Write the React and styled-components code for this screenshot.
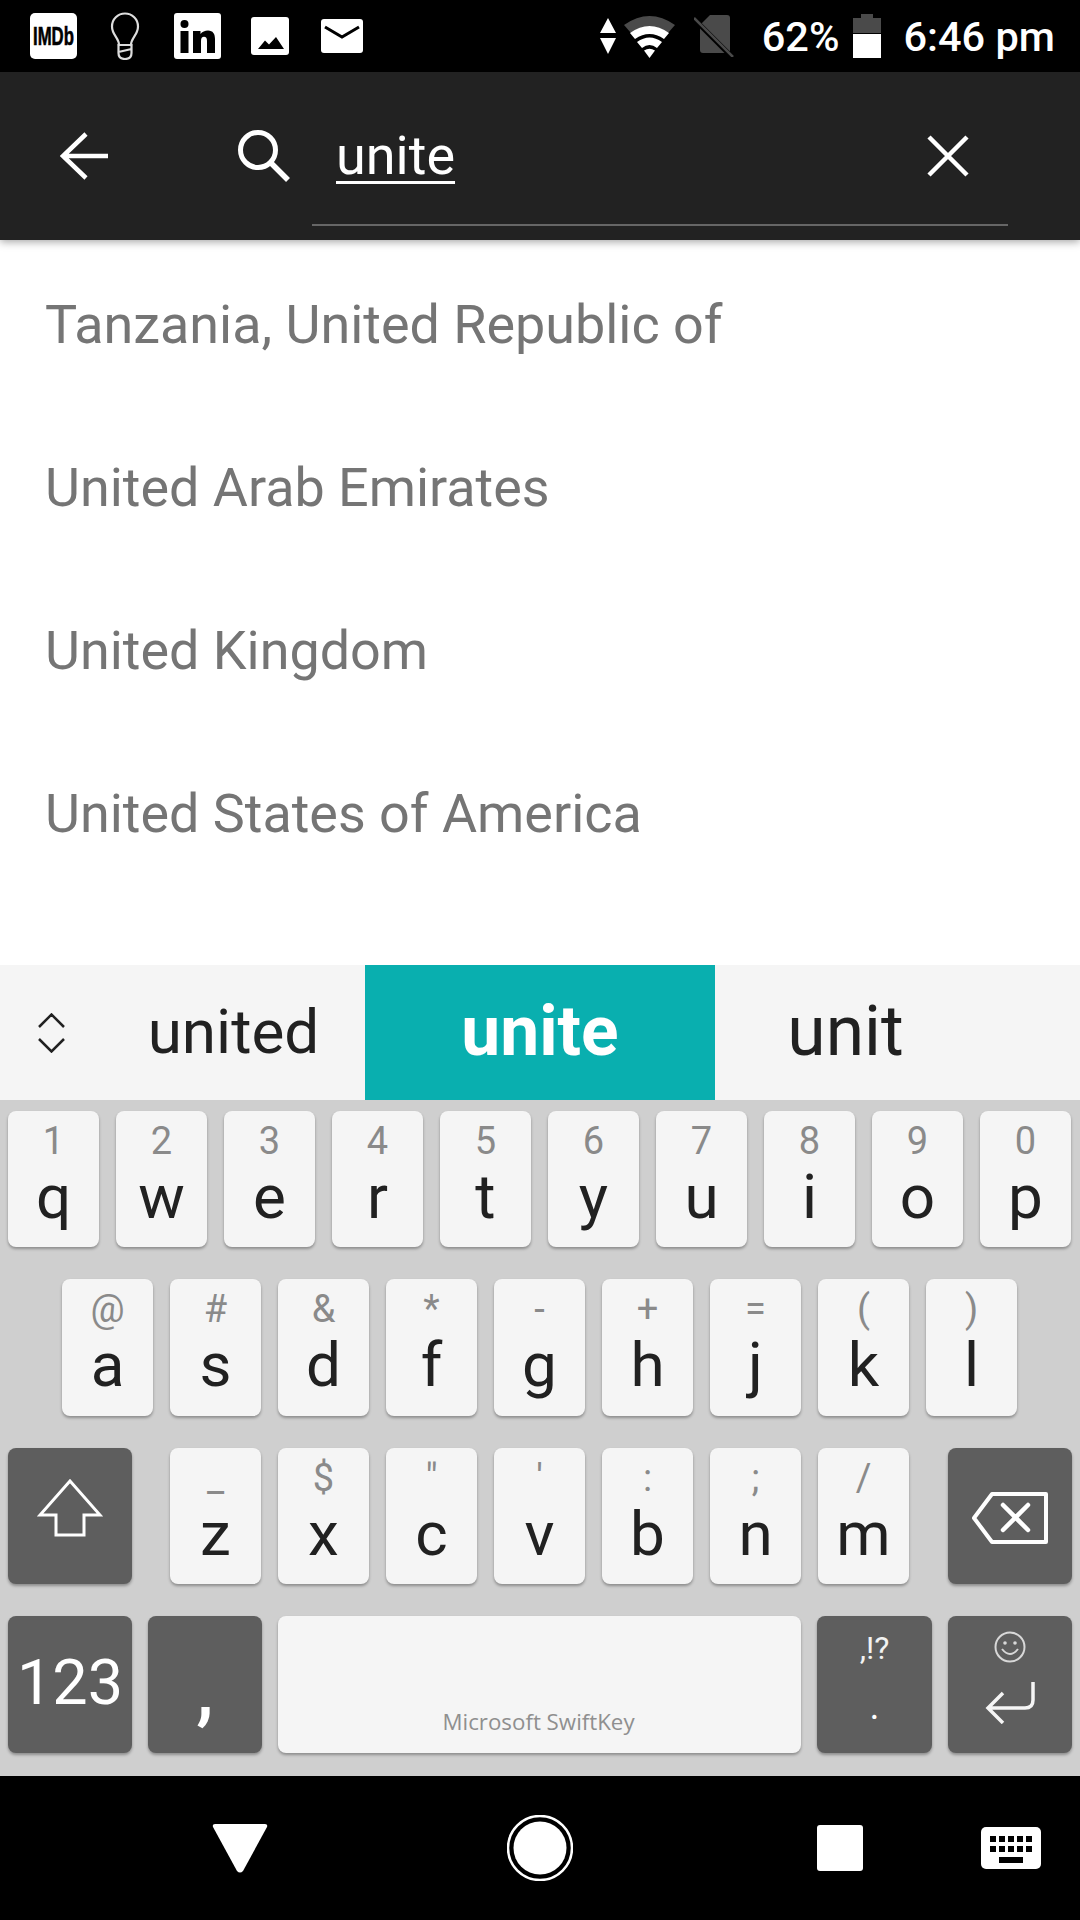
import React from "react";
import styled, { createGlobalStyle } from "styled-components";

const Global = createGlobalStyle`
  html, body { margin: 0; padding: 0; background: #000; }
  * { box-sizing: border-box; }
`;

const Page = styled.div`
  width: 1080px; height: 1920px; display: flex; flex-direction: column; overflow: hidden;
  font-family: Roboto, "Liberation Sans", sans-serif; background: #fff;
`;
const StatusBar = styled.div`
  height: 72px; flex: none; background: #000; display: flex; align-items: center; justify-content: space-between;
  padding: 0 25px 0 30px; color: #fff;
`;
const StatusGroup = styled.div`display: flex; align-items: center;`;
const Glyph = styled.svg`display: block; flex: none; margin-left: ${p => p.$ml || 0}px; margin-top: ${p => p.$mt || 0}px;`;
const StatusText = styled.span`
  font-size: ${p => p.$size}px; font-weight: 500; line-height: 72px; padding-top: 2px; margin-left: ${p => p.$ml}px; white-space: nowrap;
`;
const Toolbar = styled.div`
  height: 168px; flex: none; background: #222; display: flex; align-items: center; padding: 0 0 0 60px;
  position: relative; z-index: 2; box-shadow: 0 2px 8px rgba(0,0,0,.35);
`;
const Field = styled.div`
  margin-left: 21px; width: 696px; align-self: stretch; margin-bottom: 14px; padding: 16px 39px 0 24px;
  border-bottom: 2px solid #666; display: flex; align-items: center; justify-content: space-between;
`;
const Query = styled.span`
  color: #fff; font-size: 54px; line-height: 64px; text-decoration: underline; text-decoration-thickness: 3px; text-underline-offset: 7px;
`;
const List = styled.div`height: 725px; flex: none; padding: 3px 0 0 45px; background: #fff;`;
const Row = styled.div`
  height: 163px; display: flex; align-items: center; color: #757575; font-size: 53.9px; white-space: nowrap;
`;
const Suggestions = styled.div`
  height: 135px; flex: none; background: #f5f5f5; display: flex; align-items: stretch; color: #212121;
`;
const Toggle = styled.div`width: 100px; padding-left: 38px; display: flex; align-items: center;`;
const Cell = styled.div`
  width: ${p => p.$w}px; padding: 0 ${p => p.$pr || 0}px 2px ${p => p.$pl || 0}px; display: flex; align-items: center; justify-content: center;
  font-size: ${p => p.$size}px; font-weight: ${p => p.$on ? 700 : 400};
  background: ${p => p.$on ? "#09afaf" : "transparent"}; color: ${p => p.$on ? "#fff" : "#212121"};
`;
const Keyboard = styled.div`
  height: 676px; flex: none; background: #cfcfcf; padding: 10.5px 8px 0; display: flex; flex-direction: column; gap: 32px;
`;
const KeyRow = styled.div`
  display: flex; height: 136.5px; gap: ${p => p.$between ? 0 : 17}px; padding-left: ${p => p.$pl || 0}px;
  justify-content: ${p => p.$between ? "space-between" : "flex-start"};
`;
const Letters = styled.div`display: flex; gap: 17px; margin-left: -1px;`;
const Key = styled.div`
  width: ${p => p.$w || 91}px; height: 100%; border-radius: 8px; flex: none; display: flex; flex-direction: column; align-items: center;
  background: ${p => p.$dark ? "#5e5e5e" : "#f5f5f5"}; color: ${p => p.$dark ? "#fff" : "#212121"};
  box-shadow: 0 2px 3px rgba(0,0,0,.32);
  padding-top: ${p => p.$pt ?? 8}px;
`;
const Hint = styled.span`font-size: 38px; line-height: 44px; height: 44px; color: #8a8a8a;`;
const Main = styled.span`font-size: 62px; line-height: 66px; margin-top: 1px;`;
const BigLabel = styled.span`font-size: 63px; font-weight: 400; line-height: 134px;`;
const Comma = styled.span`font-size: 78px; font-weight: 500; line-height: 80px; margin-top: 26px;`;
const Brand = styled.span`
  font-family: "Open Sans", sans-serif; font-size: 22.3px; line-height: 30px; color: #8f8f8f; margin-top: 91px; margin-right: 2px; white-space: nowrap;
`;
const SmallPunct = styled.span`font-size: 32px; line-height: 36px; color: #f2f2f2; margin-top: 4px;`;
const Dot = styled.span`font-size: 38px; line-height: 40px; margin-top: 20px;`;
const NavBar = styled.div`flex: none; height: 144px; background: #000; display: flex; align-items: center; padding-left: 212px;`;

const rows = [
  ["1q","2w","3e","4r","5t","6y","7u","8i","9o","0p"],
  ["@a","#s","&d","*f","-g","+h","=j","(k",")l"],
  ["_z","$x","\"c","'v",":b",";n","/m"],
];
const LetterKey = ({ k }) => (
  <Key><Hint>{k[0]}</Hint><Main>{k[1]}</Main></Key>
);

export default function App() {
  return (
    <Page>
      <Global />
      <StatusBar>
        <StatusGroup>
          <Glyph width="47" height="46" viewBox="0 0 47 46">
            <rect width="47" height="46" rx="5" fill="#fff" />
            <text transform="translate(3 32) scale(.67 1)" fontFamily="'Liberation Sans', sans-serif" fontWeight="700" fontSize="25" fill="#000" stroke="#000" strokeWidth=".6">IMDb</text>
          </Glyph>
          <Glyph $ml={33} width="30" height="48" viewBox="0 0 30 48" fill="none" stroke="#ddd" strokeWidth="2.2">
            <path d="M9 33C9 26 2 23 2 14.500A13 13 0 0 1 28 14.500C28 23 21 26 21 33Z" />
            <path d="M8.500 33H21.500V41Q21.500 47 15 47T8.500 41ZM8.500 40L21.500 37" />
          </Glyph>
          <Glyph $ml={34} width="47" height="46" viewBox="0 0 47 46">
            <rect width="47" height="46" rx="3" fill="#fff" />
            <circle cx="10.500" cy="11" r="4" fill="#000" />
            <rect x="6.500" y="18" width="8" height="22" fill="#000" />
            <path d="M19 18H26.500V21C28 19 31 17.500 34 17.500C39 17.500 41 21 41 26V40H33V28C33 25 32 23.800 30 23.800C28 23.800 27 25.200 27 28V40H19Z" fill="#000" />
          </Glyph>
          <Glyph $ml={30} width="38" height="38" viewBox="0 0 38 38">
            <rect width="38" height="38" rx="3" fill="#fff" />
            <path d="M7 32L14 23.500L18 27.500L25 20L33 32Z" fill="#000" />
          </Glyph>
          <Glyph $ml={32} width="42" height="34" viewBox="0 0 42 34">
            <rect width="42" height="34" rx="3" fill="#fff" />
            <path d="M4 8L21 18L38 8" fill="none" stroke="#000" strokeWidth="3" />
          </Glyph>
        </StatusGroup>
        <StatusGroup>
          <Glyph width="16" height="36" viewBox="0 0 16 36" fill="#fff">
            <path d="M8 0L16 15H0ZM0 20H16L8 36Z" />
          </Glyph>
          <Glyph $ml={8} width="51" height="43" viewBox="0 0 51 43">
            <path d="M0 10Q25.500 -8 51 10L44 18Q25.500 5 7 18Z" fill="#4a4a4a" />
            <path d="M6 18Q25.500 4 45 18L40 24Q25.500 14 11 24Z" fill="#fff" />
            <path d="M13 27Q25.500 18 38 27L33 33Q25.500 27 18 33Z" fill="#fff" />
            <path d="M20 35.500Q25.500 32 31 35.500L25.500 43Z" fill="#fff" />
          </Glyph>
          <Glyph $ml={19} width="40" height="42" viewBox="0 0 40 42">
            <path d="M16 0H33A3 3 0 0 1 36 3V35A3 3 0 0 1 33 38H9A3 3 0 0 1 6 35V10Z" fill="#4a4a4a" />
            <path d="M1 5L38 42" stroke="#000" strokeWidth="5" />
            <path d="M0 3L39 42" stroke="#4a4a4a" strokeWidth="2.500" />
          </Glyph>
          <StatusText $size={41.5} $ml={28}>62%</StatusText>
          <Glyph $ml={13} width="28" height="44" viewBox="0 0 28 44">
            <path d="M8 0H20V4H28V19H0V4H8Z" fill="#4a4a4a" />
            <rect y="20" width="28" height="24" fill="#fff" />
          </Glyph>
          <StatusText $size={41.5} $ml={23}>6:46 pm</StatusText>
        </StatusGroup>
      </StatusBar>

      <Toolbar>
        <Glyph width="48" height="48" viewBox="0 0 48 48" fill="none" stroke="#fff" strokeWidth="4.500">
          <path d="M48 24H4M26 2L3 24L26 46" />
        </Glyph>
        <Glyph $ml={129} width="54" height="54" viewBox="0 0 54 54" fill="none" stroke="#fff" strokeWidth="5">
          <circle cx="21" cy="21" r="17.500" />
          <path d="M33 33L51 51" strokeWidth="5.500" />
        </Glyph>
        <Field>
          <Query>unite</Query>
          <Glyph width="42" height="42" viewBox="0 0 42 42" fill="none" stroke="#fff" strokeWidth="4.500">
            <path d="M2 2L40 40M40 2L2 40" />
          </Glyph>
        </Field>
      </Toolbar>

      <List>
        <Row>Tanzania, United Republic of</Row>
        <Row>United Arab Emirates</Row>
        <Row>United Kingdom</Row>
        <Row>United States of America</Row>
      </List>

      <Suggestions>
        <Toggle>
          <Glyph width="27" height="40" viewBox="0 0 27 40" fill="none" stroke="#212121" strokeWidth="2.500">
            <path d="M1 14L13.500 1.500L26 14M1 26L13.500 38.500L26 26" />
          </Glyph>
        </Toggle>
        <Cell $w={265} $pl={2} $size={62}>united</Cell>
        <Cell $w={350} $size={69.5} $on>unite</Cell>
        <Cell $w={365} $size={69.5} $pr={104}>unit</Cell>
      </Suggestions>

      <Keyboard>
        <KeyRow>{rows[0].map(k => <LetterKey key={k} k={k} />)}</KeyRow>
        <KeyRow $pl={54}>{rows[1].map(k => <LetterKey key={k} k={k} />)}</KeyRow>
        <KeyRow $between>
          <Key $dark $w={124} $pt={31}>
            <Glyph width="66" height="58" viewBox="0 0 66 58" fill="none" stroke="#fff" strokeWidth="3">
              <path d="M33 2L63 36H47V56H19V36H3Z" />
            </Glyph>
          </Key>
          <Letters>{rows[2].map(k => <LetterKey key={k} k={k} />)}</Letters>
          <Key $dark $w={124} $pt={44}>
            <Glyph width="76" height="52" viewBox="0 0 76 52" fill="none" stroke="#fff" strokeWidth="4">
              <path d="M20 2H74V50H20L2 26Z" strokeLinejoin="round" />
              <path d="M31 13L56 38M56 13L31 38" strokeWidth="4.500" strokeLinecap="round" />
            </Glyph>
          </Key>
        </KeyRow>
        <KeyRow $between>
          <Key $dark $w={124} $pt={0}><BigLabel>123</BigLabel></Key>
          <Key $dark $w={114}><Comma>,</Comma></Key>
          <Key $w={523} $pt={0}><Brand>Microsoft SwiftKey</Brand></Key>
          <Key $dark $w={115} $pt={10}>
            <SmallPunct>,!?</SmallPunct>
            <Dot>.</Dot>
          </Key>
          <Key $dark $w={124} $pt={15}>
            <Glyph width="32" height="32" viewBox="0 0 32 32" fill="none" stroke="#d8d8d8" strokeWidth="2">
              <circle cx="16" cy="16" r="14.500" />
              <circle cx="11" cy="12" r="1.800" fill="#d8d8d8" stroke="none" />
              <circle cx="21" cy="12" r="1.800" fill="#d8d8d8" stroke="none" />
              <path d="M8 18Q16 28 24 18" />
            </Glyph>
            <Glyph $mt={19} width="50" height="42" viewBox="0 0 50 42" fill="none" stroke="#f5f5f5" strokeWidth="3.500">
              <path d="M48 0V18Q48 26 40 26H3M18 11L3 26L18 41" />
            </Glyph>
          </Key>
        </KeyRow>
      </Keyboard>

      <NavBar>
        <Glyph width="56" height="49" viewBox="0 0 56 49" fill="#fff">
          <path d="M3 0H53Q56 0 55 3L31 47Q28 50 25 47L1 3Q0 0 3 0Z" />
        </Glyph>
        <Glyph $ml={239} width="66" height="66" viewBox="0 0 66 66">
          <circle cx="33" cy="33" r="32" fill="none" stroke="#fff" strokeWidth="2.500" />
          <circle cx="33" cy="33" r="26.500" fill="#fff" />
        </Glyph>
        <Glyph $ml={244} width="46" height="46" viewBox="0 0 46 46">
          <rect width="46" height="46" rx="3" fill="#fff" />
        </Glyph>
        <Glyph $ml={118} width="60" height="42" viewBox="0 0 60 42">
          <rect width="60" height="42" rx="5" fill="#fff" />
          <path d="M9 9h6v6H9zM18 9h6v6h-6zM27 9h6v6h-6zM36 9h6v6h-6zM45 9h6v6h-6zM9 19h6v6H9zM18 19h6v6h-6zM27 19h6v6h-6zM36 19h6v6h-6zM45 19h6v6h-6zM18 30h24v6H18z" fill="#000" />
        </Glyph>
      </NavBar>
    </Page>
  );
}
